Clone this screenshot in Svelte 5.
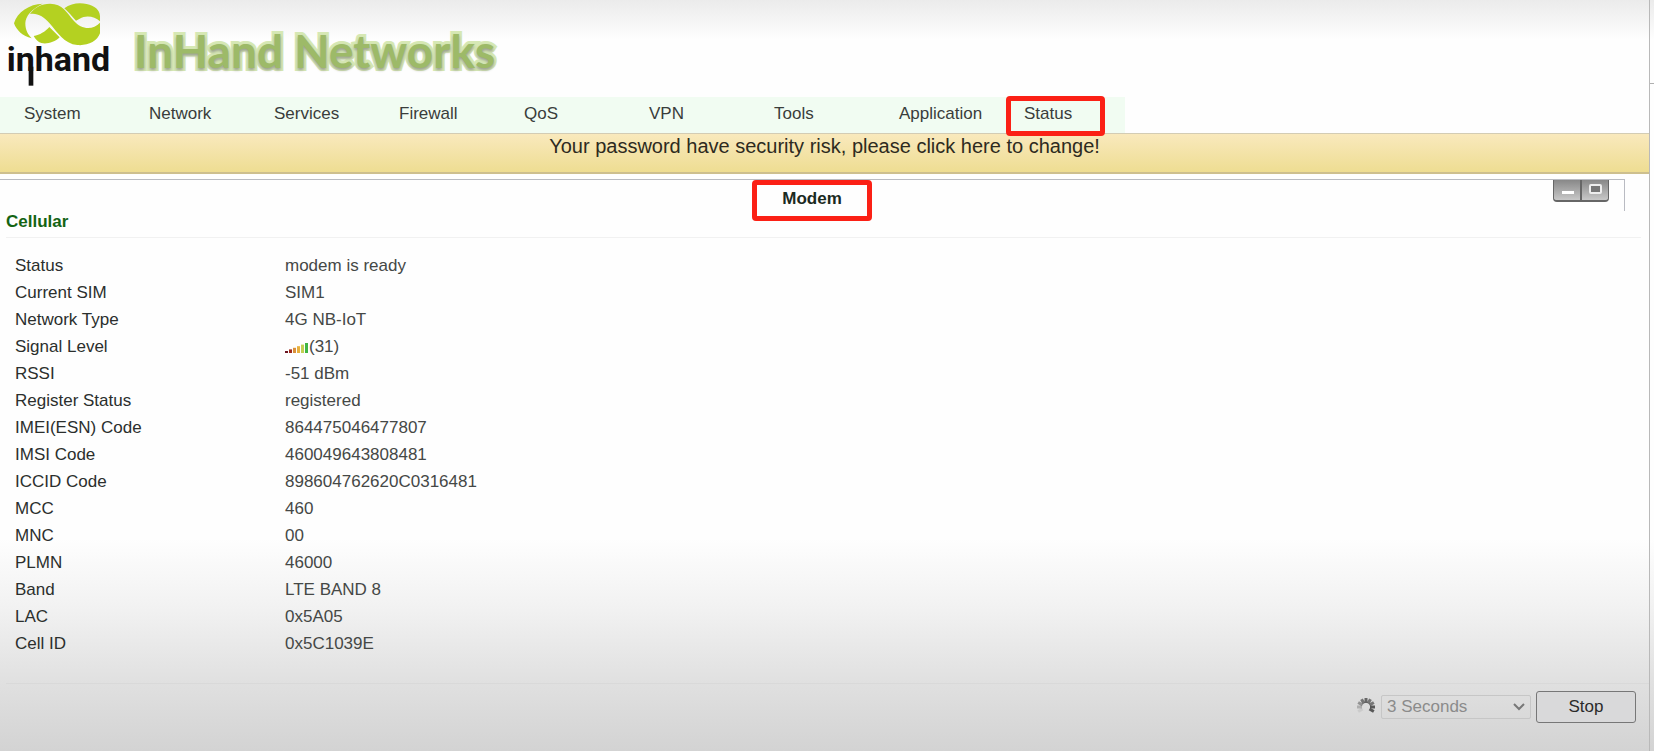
<script lang="ts">
    const menu = [
        "System",
        "Network",
        "Services",
        "Firewall",
        "QoS",
        "VPN",
        "Tools",
        "Application",
        "Status",
    ];

    const rows = [
        { label: "Status", value: "modem is ready" },
        { label: "Current SIM", value: "SIM1" },
        { label: "Network Type", value: "4G NB-IoT" },
        { label: "Signal Level", value: "(31)", signal: true },
        { label: "RSSI", value: "-51 dBm" },
        { label: "Register Status", value: "registered" },
        { label: "IMEI(ESN) Code", value: "864475046477807" },
        { label: "IMSI Code", value: "460049643808481" },
        { label: "ICCID Code", value: "898604762620C0316481" },
        { label: "MCC", value: "460" },
        { label: "MNC", value: "00" },
        { label: "PLMN", value: "46000" },
        { label: "Band", value: "LTE BAND 8" },
        { label: "LAC", value: "0x5A05" },
        { label: "Cell ID", value: "0x5C1039E" },
    ];

    const bars = ["#6b1420", "#a02a1c", "#d9903a", "#e8b03c", "#c3cf52", "#3fb544"];
    const spokes = [0.8, 0.7, 0.7, 0.9, 0.9, 0, 0, 0, 0.1, 0.3, 0.5, 0.7];

    let active = $state("Status");
    let interval = $state("3");
    let running = $state(true);
    let minimized = $state(false);
</script>

<div class="page">
    <div class="content">
        <header>
            <svg class="logo" viewBox="0 0 390 285" role="img" aria-label="inhand logo">
                <g fill="#b4d121">
                    <path d="M42 70C52 36 88 12 128 11C96 26 76 48 76 70C76 90 84 104 95 115C68 108 50 92 42 70Z" />
                    <path d="M90 42C103 22 124 11 150 11C188 11 200 38 222 63C243 88 278 92 300 68V100C292 124 262 138 232 135C192 131 172 96 150 71C131 48 110 38 90 42Z" />
                    <path d="M101 108C120 104 135 96 148 81L179 112C164 127 140 133 124 129C114 126 106 118 101 108Z" />
                    <path d="M193 25C212 10 238 7 260 12C284 17 299 30 300 48V64C284 49 258 45 239 56L228 62C216 50 206 36 193 25Z" />
                </g>
                <rect x="86" y="200" width="14" height="57" fill="#111" />
                <text x="20" y="213">inhand</text>
            </svg>
            <h1>InHand Networks</h1>
        </header>

        <nav>
            {#each menu as item}
                <a
                    href="#{item.toLowerCase()}"
                    class:marked={item === active}
                    onclick={() => (active = item)}>{item}</a
                >
            {/each}
        </nav>

        <a class="warning" href="#password">
            Your password have security risk, please click here to change!
        </a>

        <main>
            <div class="title-bar">
                <h2>Modem</h2>
                <div class="window-buttons">
                    <button aria-label="Minimize" onclick={() => (minimized = true)}>
                        <svg viewBox="0 0 26 20">
                            <rect x="8" y="11" width="12" height="3" fill="#fff" />
                        </svg>
                    </button>
                    <button aria-label="Maximize" onclick={() => (minimized = false)}>
                        <svg viewBox="0 0 26 20">
                            <rect x="8" y="5" width="11" height="8" rx="1" fill="#777" stroke="#eee" stroke-width="2" />
                        </svg>
                    </button>
                </div>
            </div>

            <h3>Cellular</h3>

            {#if !minimized}
                <table>
                    <tbody>
                        {#each rows as row}
                            <tr>
                                <th scope="row">{row.label}</th>
                                <td>
                                    {#if row.signal}
                                        <svg class="signal" viewBox="0 0 24 10" aria-hidden="true">
                                            {#each bars as color, i}
                                                <rect
                                                    x={i * 4}
                                                    y={8 - i * 1.6}
                                                    width="3"
                                                    height={2 + i * 1.6}
                                                    fill={color}
                                                />
                                            {/each}
                                        </svg>{/if}{row.value}
                                </td>
                            </tr>
                        {/each}
                    </tbody>
                </table>
            {/if}
        </main>

        <footer>
            <svg class="spinner" viewBox="-10 -10 20 20" aria-hidden="true">
                {#each spokes as opacity, i}
                    <line
                        y1="-4"
                        y2="-9"
                        stroke="#4a4a4a"
                        stroke-width="3"
                        {opacity}
                        transform="rotate({i * 30})"
                    />
                {/each}
            </svg>
            <div class="select-box">
                <select aria-label="Refresh interval" bind:value={interval} disabled={running}>
                    <option value="3">3 Seconds</option>
                    <option value="5">5 Seconds</option>
                    <option value="10">10 Seconds</option>
                </select>
                <svg class="arrow" viewBox="0 0 12 8" aria-hidden="true">
                    <path d="M1 1L6 6L11 1" fill="none" stroke="#777" stroke-width="2" />
                </svg>
            </div>
            <button class="stop" onclick={() => (running = !running)}>
                {running ? "Stop" : "Start"}
            </button>
        </footer>
    </div>
    <div class="edge"></div>
</div>

<style>
    :global(body) {
        margin: 0;
    }

    .page {
        display: grid;
        grid-template-columns: 1fr 4px;
        box-sizing: border-box;
        min-height: 100vh;
        font-family: "Liberation Sans", Arial, sans-serif;
        font-size: 17px;
        color: #2b2f2d;
        background:
            linear-gradient(#ebebeb, rgba(255, 255, 255, 0) 40px),
            linear-gradient(to top, #d3d3d3, #e0e0e0 68px, #f1f1f1 140px, rgba(255, 255, 255, 0) 212px),
            #fefefe;
    }

    .content {
        border-right: 1px solid #b9b9b9;
    }

    .edge {
        height: 83px;
        border-bottom: 1px solid #b0b0b0;
    }

    header {
        display: flex;
        align-items: flex-start;
        height: 97px;
    }

    .logo {
        width: 130px;
        height: 95px;
    }

    .logo text {
        font-family: Roboto, sans-serif;
        font-size: 102px;
        font-weight: 700;
        fill: #111;
    }

    h1 {
        margin: 23px 0 0 4px;
        font-family: Lato, sans-serif;
        font-size: 46px;
        font-weight: 700;
        line-height: 56px;
        white-space: nowrap;
        color: #9dba68;
        -webkit-text-stroke: 6px #d6e8b4;
        paint-order: stroke fill;
        text-shadow: 0 2px 3px #9a9f90;
    }

    nav {
        display: flex;
        width: 1125px;
        height: 36px;
        background: #f1fcf2;
    }

    nav a {
        position: relative;
        box-sizing: border-box;
        width: 125px;
        padding-left: 24px;
        line-height: 34px;
        color: #3a3d3b;
        text-decoration: none;
    }

    /* marker frame round the current entry */
    nav a.marked::after {
        content: "";
        position: absolute;
        top: -1px;
        left: 6px;
        box-sizing: border-box;
        width: 99px;
        height: 40px;
        border: 5px solid #fb2015;
        border-radius: 4px;
    }

    .warning {
        display: block;
        box-sizing: border-box;
        height: 41px;
        border-top: 1px solid #d3ccb4;
        border-bottom: 2px solid #cdbf8e;
        background: linear-gradient(#f9e9bd, #eedd92);
        font-size: 20px;
        line-height: 24px;
        text-align: center;
        text-decoration: none;
        color: #2d2a20;
    }

    main {
        padding-top: 5px;
    }

    .title-bar {
        display: grid;
        grid-template-columns: 1fr auto 1fr;
        box-sizing: border-box;
        height: 32px;
        margin-right: 24px;
        border-top: 1px solid #b9bbc2;
        border-right: 1px solid #b9bbc2;
    }

    h2 {
        grid-column: 2;
        box-sizing: border-box;
        width: 120px;
        height: 41px;
        margin: 0;
        border: 5px solid #fb2015;
        border-radius: 4px;
        font-size: 17px;
        line-height: 28px;
        text-align: center;
        color: #1b2a1e;
    }

    .window-buttons {
        display: flex;
        justify-self: end;
        height: 22px;
        margin-right: 15px;
    }

    .window-buttons button {
        box-sizing: border-box;
        width: 28px;
        padding: 0;
        border: 1px solid #666;
        border-top: 0;
        border-bottom-width: 2px;
        background: linear-gradient(#888, #c8c8c8);
    }

    .window-buttons button:first-child {
        border-bottom-left-radius: 4px;
    }

    .window-buttons button:last-child {
        border-bottom-right-radius: 4px;
    }

    .window-buttons svg {
        display: block;
        width: 26px;
        height: 20px;
    }

    h3 {
        margin: 0 8px 0 6px;
        border-bottom: 1px solid #f1f1f1;
        font-size: 17px;
        line-height: 22px;
        padding-bottom: 4px;
        color: #146414;
    }

    table {
        margin: 14px 0 26px 15px;
        border-collapse: collapse;
    }

    th,
    td {
        height: 27px;
        padding: 0;
        font-weight: 400;
        line-height: 27px;
        text-align: left;
        white-space: nowrap;
    }

    th {
        width: 270px;
    }

    td {
        color: #454846;
    }

    .signal {
        width: 24px;
        height: 10px;
        vertical-align: -1px;
    }

    footer {
        display: flex;
        align-items: center;
        box-sizing: border-box;
        height: 68px;
        margin-left: 6px;
        padding: 0 13px 22px 0;
        justify-content: flex-end;
        border-top: 1px solid #d9d9d9;
    }

    .spinner {
        width: 20px;
        height: 20px;
        margin-right: 5px;
    }

    .select-box {
        position: relative;
    }

    select {
        appearance: none;
        display: block;
        box-sizing: border-box;
        width: 150px;
        height: 24px;
        padding: 0 5px;
        border: 1px solid #c6c6c6;
        border-radius: 2px;
        background: transparent;
        font: inherit;
        color: #8b8b8b;
        opacity: 1;
    }

    .arrow {
        position: absolute;
        top: 8px;
        right: 6px;
        width: 12px;
        height: 8px;
        pointer-events: none;
    }

    .stop {
        width: 100px;
        height: 32px;
        margin-left: 5px;
        border: 1px solid #777;
        border-radius: 3px;
        background: #d9d9da;
        font: inherit;
        color: #2b2b2b;
    }
</style>
